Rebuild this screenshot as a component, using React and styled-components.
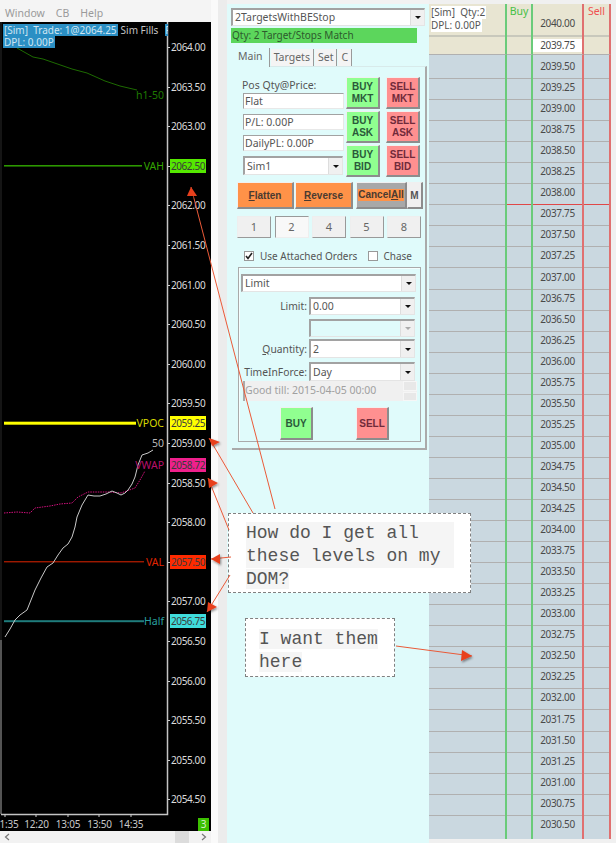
import styled, { createGlobalStyle } from "styled-components";

const GlobalStyle = createGlobalStyle`
  html, body { margin: 0; padding: 0; background: #f4f4f4; }
  * { box-sizing: border-box; }
`;

const UI_FONT = `"Noto Sans", "Liberation Sans", sans-serif`;

const priceY = (p) => 47 + (2064 - p) * 79.2 - 22;

const AXIS = [];
for (let p = 2064; p >= 2054.5; p -= 0.5) AXIS.push(p);

const LEVELS = [
  { price: 2062.5, name: "VAH", bg: "#55e800", color: "#35a500", line: "#2fa000", h: 1.5, end: 142 },
  { price: 2059.25, name: "VPOC", bg: "#ffff00", color: "#d8d800", line: "#ffff00", h: 3, end: 136 },
  { price: 2058.72, name: "VWAP", bg: "#f0208c", color: "#b8106c" },
  { price: 2057.5, name: "VAL", bg: "#ff2a00", color: "#e02400", line: "#e02400", h: 1, end: 144 },
  { price: 2056.75, name: "Half", bg: "#3fdcdc", color: "#2aa0a0", line: "#1f7c7c", h: 2, end: 144 },
];

// label, tick x, label centre x
const TIMES = [
  ["1:35", 5, 9],
  ["12:20", 36, 36.5],
  ["13:05", 68, 68],
  ["13:50", 99, 99.5],
  ["14:35", 131, 131],
];

const pts = (a) => a.map((p) => p.join(",")).join(" ");
const WHITE = [[5,637],[10,629],[15,620],[20,615],[27,610],[31,600],[35,590],[41,578],[47,567],[53,563],[58,555],[63,548],[68,544],[72,537],[75,527],[77,517],[82,505],[88,495],[94,496],[100,496],[106,494],[112,491],[117,493],[121,495],[125,493],[128,490],[132,484],[135,477],[138,465],[142,455],[148,453],[153,450]];
const VWAP = [[4,513],[17,512],[30,513],[35,508],[50,506],[60,504],[72,503],[78,497],[88,492],[110,492],[121,493],[135,488],[140,480],[145,471]];
const H1 = [[17,48],[33,57],[43,59],[72,69],[87,73],[105,81],[120,86],[137,90]];

const ARROWS = [
  { from: [275, 509], tip: [191, 187], a: [187, 196], b: [197, 196] },
  { from: [253, 513], tip: [209, 438], a: [220, 442], b: [212, 446] },
  { from: [229, 530], tip: [208, 478], a: [218, 483], b: [209, 488] },
  { from: [231, 557], tip: [211, 559], a: [220, 554], b: [220, 564] },
  { from: [230, 575], tip: [207, 612], a: [208, 602], b: [217, 607] },
  { from: [396, 646], tip: [472, 656], a: [462, 650], b: [461, 661] },
];

const DOM_ROWS = [];
for (let p = 2039.5; p >= 2030.5; p -= 0.25) DOM_ROWS.push(p);

const Page = styled.div`
  position: relative;
  display: flex;
  width: 616px;
  height: 843px;
  overflow: hidden;
  font-family: ${UI_FONT};
  background: #f4f4f4;
`;

/* ---------- chart window ---------- */
const ChartWindow = styled.div`
  width: 211px;
  height: 843px;
  display: flex;
  flex-direction: column;
`;

const MenuBar = styled.div`
  height: 22px;
  background: #f4f4f4;
  display: flex;
  align-items: center;
  gap: 11px;
  padding: 3px 0 0 5px;
  font-size: 10.5px;
  color: #9a9a9a;
`;

const ChartBody = styled.div`
  position: relative;
  flex: 1;
  background: #000;
  overflow: hidden;
`;

const ChartSvg = styled.svg`
  position: absolute;
  left: 0;
  top: 0;
`;

const InfoRow = styled.div`
  position: absolute;
  left: 3px;
  top: ${(p) => p.$top}px;
  display: flex;
  white-space: pre;
  font-size: 10px;
  line-height: 12px;
`;

const InfoTag = styled.span`
  background: #2b8fc4;
  color: #cfe6f2;
  padding: 0 1px;
`;

const InfoPlain = styled.span`
  color: #c4c4c4;
  padding-left: 3px;
`;

const InfoClip = styled.span`
  width: 3px;
  margin-left: 7px;
  overflow: hidden;
  background: #2b8fc4;
  color: #cfe6f2;
`;

const AxisLabel = styled.div`
  position: absolute;
  left: 171px;
  font-size: 10px;
  letter-spacing: -0.4px;
  line-height: 14px;
  color: #dcdcdc;
  transform: translateY(-7px);
  &::before {
    content: "";
    position: absolute;
    left: -3px;
    top: 7px;
    width: 2px;
    height: 1px;
    background: #ccc;
  }
`;

const LevelTag = styled.div`
  position: absolute;
  left: 170px;
  width: 36px;
  height: 14px;
  text-align: center;
  font-size: 10px;
  letter-spacing: -0.4px;
  line-height: 14px;
  color: #3a3a3a;
  background: ${(p) => p.$bg};
  transform: translateY(-7px);
`;

const LevelName = styled.div`
  position: absolute;
  right: 47px;
  font-size: 10.5px;
  line-height: 14px;
  color: ${(p) => p.$color};
  transform: translateY(-7px);
`;

const TimeLabel = styled.div`
  position: absolute;
  top: 795px;
  font-size: 10px;
  letter-spacing: -0.2px;
  line-height: 14px;
  color: #c8c8c8;
  transform: translateX(-50%);
`;

const PageBadge = styled.div`
  position: absolute;
  left: 198px;
  top: 796px;
  width: 11px;
  height: 13px;
  background: #3cc000;
  color: #d8f0c8;
  font-size: 10px;
  line-height: 13px;
  text-align: center;
`;

const HScroll = styled.div`
  height: 12px;
  background: #f2f2f2;
  display: flex;
  align-items: center;
  justify-content: space-between;
  padding: 0 4px;
`;

const ScrollArrow = styled.svg`
  width: 6px;
  height: 8px;
`;

const ScrollThumb = styled.div`
  width: 14px;
  height: 12px;
  background: #dcdcdc;
  margin-left: auto;
  margin-right: 12px;
`;

const Gutter = styled.div`
  width: 16px;
  display: flex;
`;

const GutterLeft = styled.div`
  width: 7px;
  background: #fafafa;
`;

const GutterRight = styled.div`
  flex: 1;
  background: #ececec;
`;

/* ---------- order panel ---------- */
const Panel = styled.div`
  width: 202px;
  background: #e0fbfb;
  padding: 8px 0 0 4px;
  position: relative;
`;

const PanelTopStrip = styled.div`
  position: absolute;
  left: 0;
  top: 0;
  right: 0;
  height: 4px;
  background: #f2f2f2;
`;

const Combo = styled.div`
  display: flex;
  width: ${(p) => p.$w}px;
  height: ${(p) => p.$h || 18}px;
  background: ${(p) => (p.$off ? "#e0fbfb" : "#fff")};
  border-style: solid;
  border-width: 2px 1px 1px 2px;
  border-color: #a2a2a2 #e4e4e4 #e4e4e4 #a2a2a2;
  font-size: 10.5px;
  line-height: ${(p) => (p.$h || 18) - 3}px;
  color: #555;
  overflow: hidden;
`;

const ComboText = styled.span`
  flex: 1;
  padding-left: 2px;
  white-space: nowrap;
`;

const ComboButton = styled.span`
  width: 14px;
  background: #f0f0f0;
  border-left: 1px solid #ddd;
  display: flex;
  align-items: center;
  justify-content: center;
  &::after {
    content: "";
    border-style: solid;
    border-width: 3px 3px 0 3px;
    border-color: ${(p) => (p.$off ? "#aaa" : "#111")} transparent transparent transparent;
  }
`;

const StatusBar = styled.div`
  width: 186px;
  height: 15px;
  margin-top: 2px;
  background: #5cd65c;
  font-size: 10px;
  line-height: 15px;
  color: #2d5a2d;
  padding-left: 1px;
  white-space: nowrap;
`;

const TabBar = styled.div`
  display: flex;
  gap: 1px;
  margin: 5px 0 0 1px;
  height: 18px;
`;

const Tab = styled.div`
  padding: 0 ${(p) => (p.$on ? 6 : 3)}px;
  height: ${(p) => (p.$on ? 19 : 17)}px;
  margin-top: ${(p) => (p.$on ? 0 : 1)}px;
  font-size: 10.5px;
  line-height: 16px;
  color: #666;
  background: ${(p) => (p.$on ? "#e0fbfb" : "#f4f4f4")};
  border-right: 1.5px solid #999;
  position: relative;
`;

const Pane = styled.div`
  width: 195px;
  height: 384px;
  margin-left: 1px;
  padding: 10px 0 0 5px;
  border-top: 1px solid #d8eaea;
  border-right: 2px solid #aaa;
  border-bottom: 2px solid #aaa;
`;

const TopBlock = styled.div`
  display: flex;
  gap: 2px;
  margin-left: 6px;
  height: 100px;
`;

const PosColumn = styled.div`
  width: 101px;
  display: flex;
  flex-direction: column;
`;

const PosLabel = styled.div`
  height: 16px;
  padding-top: 2px;
  margin-left: -1px;
  font-size: 10.5px;
  line-height: 13px;
  color: #555;
  white-space: nowrap;
`;

const ReadOnly = styled.div`
  height: 16px;
  margin-bottom: 5px;
  background: #fff;
  border-style: solid;
  border-width: 1px 1px 1px 1px;
  border-color: #a2a2a2 #e8e8e8 #e8e8e8 #a2a2a2;
  font-size: 10.5px;
  line-height: 14px;
  padding-left: 1px;
  color: #555;
  white-space: nowrap;
`;

const TradeGrid = styled.div`
  display: grid;
  grid-template-columns: 34px 34px;
  grid-auto-rows: 32px;
  column-gap: 6px;
  row-gap: 2px;
`;

const raised = `
  border-style: solid;
  border-width: 1px 2px 2px 1px;
  border-color: #f0f0f0 #8c8c8c #8c8c8c #f0f0f0;
`;

const TradeButton = styled.div`
  ${raised}
  background: ${(p) => (p.$sell ? "#ff9090" : "#90ff90")};
  font-family: "Liberation Sans", sans-serif;
  font-size: 10px;
  font-weight: 700;
  line-height: 12px;
  color: ${(p) => (p.$sell ? "#702a3a" : "#2a5a3a")};
  text-align: center;
  display: flex;
  align-items: center;
  justify-content: center;
`;

const ActionRow = styled.div`
  display: flex;
  margin-top: 5px;
  height: 27px;
`;

const ActionButton = styled.div`
  ${raised}
  width: ${(p) => p.$w}px;
  margin-right: ${(p) => p.$gap || 0}px;
  background: ${(p) => (p.$muted ? "#a8a8a8" : "#ff9248")};
  font-family: "Liberation Sans", sans-serif;
  font-size: 10px;
  font-weight: 700;
  color: #4a3a30;
  display: flex;
  align-items: center;
  justify-content: center;
  u { text-decoration: underline; }
`;

const OrangeText = styled.span`
  background: #ff9248;
  line-height: 12px;
`;

const MoreButton = styled.div`
  ${raised}
  width: 16px;
  background: #f0f0f0;
  font-family: "Liberation Sans", sans-serif;
  font-size: 10px;
  font-weight: 700;
  color: #555;
  display: flex;
  align-items: center;
  justify-content: center;
`;

const SizeRow = styled.div`
  display: flex;
  gap: 3.5px;
  margin-top: 7px;
  height: 22px;
`;

const SizeButton = styled.div`
  width: 34px;
  height: 22px;
  background: ${(p) => (p.$on ? "#f8f8f8" : "#f0f0f0")};
  border-style: solid;
  border-width: 1px;
  border-color: ${(p) => (p.$on ? "#999 #eee #eee #999" : "#eee #999 #999 #eee")};
  font-size: 11px;
  line-height: 20px;
  text-align: center;
  color: #666;
`;

const CheckRow = styled.div`
  display: flex;
  align-items: center;
  margin: 11px 0 0 7px;
  height: 13px;
  font-size: 10px;
  color: #555;
  white-space: nowrap;
`;

const CheckBox = styled.span`
  width: 10px;
  height: 10px;
  margin-right: ${(p) => p.$gap}px;
  margin-left: ${(p) => p.$left || 0}px;
  background: #fff;
  border: 1px solid #999;
  display: flex;
`;

const GroupBox = styled.div`
  width: 183px;
  height: 175px;
  margin: 5px 0 0 1px;
  padding: 6px 3px 0 2px;
  border: 1px solid #aaa;
  box-shadow: inset 1px 1px 0 #f4ffff;
`;

const FormRow = styled.div`
  display: grid;
  grid-template-columns: 66px 108px;
  column-gap: 2px;
  margin-top: ${(p) => p.$top}px;
  align-items: center;
`;

const FormLabel = styled.label`
  font-size: 10.3px;
  color: #555;
  text-align: right;
  white-space: nowrap;
`;

const DateField = styled.div`
  display: flex;
  width: 174px;
  height: 20px;
  margin: 0 0 0 2px;
  background: #f0f0f0;
  border-left: 2px solid #aaa;
  font-size: 10.5px;
  line-height: 19px;
  color: #a0a0a0;
  white-space: nowrap;
`;

const DateText = styled.span`
  flex: 1;
`;

const Spin = styled.span`
  width: 14px;
  display: flex;
  flex-direction: column;
  gap: 1px;
`;

const SpinPart = styled.span`
  flex: 1;
  background: #e8e8e8;
  border: 1px solid #f6f6f6;
`;

const SubmitRow = styled.div`
  display: flex;
  gap: 43px;
  margin: 6px 0 0 39px;
`;

const SubmitButton = styled.div`
  ${raised}
  width: 33px;
  height: 33px;
  background: ${(p) => (p.$sell ? "#ff9090" : "#90ff90")};
  font-family: "Liberation Sans", sans-serif;
  font-size: 10px;
  font-weight: 700;
  color: ${(p) => (p.$sell ? "#702a3a" : "#2a5a3a")};
  display: flex;
  align-items: center;
  justify-content: center;
`;

/* ---------- DOM ladder ---------- */
const Dom = styled.div`
  flex: 1;
  padding-top: 4px;
  background: #f0f0f0;
`;

const Ladder = styled.div`
  width: 182px;
`;

const DomRow = styled.div`
  display: grid;
  grid-template-columns: 78px 26px 51px 27px;
  height: ${(p) => p.$h || 21.05}px;
  background: ${(p) => (p.$head ? "#e8e5d2" : "#cad8e0")};
`;

const DomCell = styled.div`
  position: relative;
  border-bottom: ${(p) =>
    p.$last ? "0" : p.$mark ? "1px solid #e04848" : p.$soft ? "2px solid #c8c8bc" : "1.5px solid #b0b0b0"};
  border-right: ${(p) => (p.$line ? `2px solid ${p.$line}` : "0")};
`;

const PriceCell = styled(DomCell)`
  font-size: 10px;
  letter-spacing: -0.35px;
  color: #4a4a4a;
  text-align: center;
  line-height: 23px;
  padding-top: ${(p) => p.$pad || 0}px;
`;

const CurrentPrice = styled.div`
  background: #fff;
  height: 13px;
  margin-top: 5px;
  line-height: 13px;
`;

const HeadInfo = styled.div`
  font-size: 10px;
  line-height: 13px;
  color: #555;
  padding: 2px 0 0 2px;
`;

const HeadInfoLine = styled.span`
  display: table;
  background: #fff;
  white-space: pre;
  padding-right: 1px;
`;

const ColTitle = styled.div`
  font-size: 10.5px;
  line-height: 15px;
  text-align: center;
  color: ${(p) => p.$color};
`;

/* ---------- annotations ---------- */
const ArrowLayer = styled.svg`
  position: absolute;
  left: 0;
  top: 0;
  pointer-events: none;
`;

const Callout = styled.div`
  position: absolute;
  left: ${(p) => p.$x}px;
  top: ${(p) => p.$y}px;
  width: ${(p) => p.$w}px;
  height: ${(p) => p.$h}px;
  padding: ${(p) => p.$pad};
  background: #fff;
  border: 1px dashed #808080;
  font-family: "Liberation Mono", monospace;
  font-size: 18px;
  line-height: 23px;
  color: #555;
`;

const CalloutBlock = styled.div`
  width: 208px;
  background: #f5f5f5;
`;

const CalloutText = styled.span`
  background: #f5f5f5;
`;

const Select = ({ w, h, off, children }) => (
  <Combo $w={w} $h={h} $off={off}>
    <ComboText>{children}</ComboText>
    <ComboButton $off={off} />
  </Combo>
);

function Chart() {
  return (
    <ChartBody>
      <ChartSvg width="211" height="809" viewBox="0 22 211 809">
        <polyline points={pts(H1)} fill="none" stroke="#1d6a00" strokeWidth="1" />
        {LEVELS.filter((l) => l.line).map((l) => (
          <rect key={l.name} x="4" y={priceY(l.price) + 22 - l.h / 2} width={l.end - 4} height={l.h} fill={l.line} />
        ))}
        <polyline points={pts(VWAP)} fill="none" stroke="#d0107c" strokeWidth="1" strokeDasharray="1.5 1" />
        <polyline points={pts(WHITE)} fill="none" stroke="#c8c8c8" strokeWidth="1" />
        <line x1="1" x2="1" y1="22" y2="640" stroke="#2a2a2a" />
        <line x1="1" x2="1" y1="640" y2="814" stroke="#a8a8a8" />
        <path d="M167.5 22V814.5H1" fill="none" stroke="#c4c4c4" strokeWidth="1.5" />
        {TIMES.map(([t, x]) => (
          <line key={t} x1={x} x2={x} y1="814" y2="817" stroke="#ccc" />
        ))}
      </ChartSvg>
      <InfoRow $top={2}>
        <InfoTag>[Sim]  Trade: 1@2064.25</InfoTag>
        <InfoPlain>Sim Fills</InfoPlain>
        <InfoClip>F</InfoClip>
      </InfoRow>
      <InfoRow $top={14}>
        <InfoTag>DPL: 0.00P</InfoTag>
      </InfoRow>
      {AXIS.map((p) => (
        <AxisLabel key={p} style={{ top: priceY(p) }}>
          {p.toFixed(2)}
        </AxisLabel>
      ))}
      {LEVELS.map((l) => (
        <LevelTag key={l.name} $bg={l.bg} style={{ top: priceY(l.price) }}>
          {l.price.toFixed(2)}
        </LevelTag>
      ))}
      {LEVELS.map((l) => (
        <LevelName key={l.name} $color={l.color} style={{ top: priceY(l.price) }}>
          {l.name}
        </LevelName>
      ))}
      <LevelName $color="#1f7a00" style={{ top: 73 }}>h1-50</LevelName>
      <LevelName $color="#b8b8b8" style={{ top: 421 }}>50</LevelName>
      {TIMES.map(([t, , c]) => (
        <TimeLabel key={t} style={{ left: c }}>{t}</TimeLabel>
      ))}
      <PageBadge>3</PageBadge>
    </ChartBody>
  );
}

function OrderPanel() {
  return (
    <Panel>
      <PanelTopStrip />
      <Select w={194}>2TargetsWithBEStop</Select>
      <StatusBar>Qty: 2 Target/Stops Match</StatusBar>
      <TabBar>
        <Tab $on>Main</Tab>
        <Tab>Targets</Tab>
        <Tab>Set</Tab>
        <Tab>C</Tab>
      </TabBar>
      <Pane>
        <TopBlock>
          <PosColumn>
            <PosLabel>Pos Qty@Price:</PosLabel>
            <ReadOnly>Flat</ReadOnly>
            <ReadOnly>P/L: 0.00P</ReadOnly>
            <ReadOnly>DailyPL: 0.00P</ReadOnly>
            <Select w={100} h={19}>Sim1</Select>
          </PosColumn>
          <TradeGrid>
            <TradeButton>BUY<br />MKT</TradeButton>
            <TradeButton $sell>SELL<br />MKT</TradeButton>
            <TradeButton>BUY<br />ASK</TradeButton>
            <TradeButton $sell>SELL<br />ASK</TradeButton>
            <TradeButton>BUY<br />BID</TradeButton>
            <TradeButton $sell>SELL<br />BID</TradeButton>
          </TradeGrid>
        </TopBlock>
        <ActionRow>
          <ActionButton $w={57} $gap={1}><span><u>F</u>latten</span></ActionButton>
          <ActionButton $w={58} $gap={3}><span><u>R</u>everse</span></ActionButton>
          <ActionButton $w={51} $muted><OrangeText>Cancel<u>A</u>ll</OrangeText></ActionButton>
          <MoreButton>M</MoreButton>
        </ActionRow>
        <SizeRow>
          <SizeButton>1</SizeButton>
          <SizeButton $on>2</SizeButton>
          <SizeButton>4</SizeButton>
          <SizeButton>5</SizeButton>
          <SizeButton>8</SizeButton>
        </SizeRow>
        <CheckRow>
          <CheckBox $gap={6}>
            <svg width="8" height="8" viewBox="0 0 8 8">
              <path d="M1 4l2 2.5L7 1" fill="none" stroke="#222" strokeWidth="1.6" />
            </svg>
          </CheckBox>
          Use Attached Orders
          <CheckBox $gap={5} $left={11} />
          Chase
        </CheckRow>
        <GroupBox>
          <Select w={175}>Limit</Select>
          <FormRow $top={5}>
            <FormLabel>Limit:</FormLabel>
            <Select w={106}>0.00</Select>
          </FormRow>
          <FormRow $top={4}>
            <span />
            <Select w={106} off> </Select>
          </FormRow>
          <FormRow $top={2}>
            <FormLabel><u>Q</u>uantity:</FormLabel>
            <Select w={106} h={19}>2</Select>
          </FormRow>
          <FormRow $top={4}>
            <FormLabel>TimeInForce:</FormLabel>
            <Select w={106} h={19}>Day</Select>
          </FormRow>
          <DateField>
            <DateText>Good till: 2015-04-05 00:00</DateText>
            <Spin><SpinPart /><SpinPart /></Spin>
          </DateField>
          <SubmitRow>
            <SubmitButton>BUY</SubmitButton>
            <SubmitButton $sell>SELL</SubmitButton>
          </SubmitRow>
        </GroupBox>
      </Pane>
    </Panel>
  );
}

function Ladderview() {
  return (
    <Dom>
      <Ladder>
        <DomRow $head $h={30}>
          <DomCell $soft $line="#6acb7a">
            <HeadInfo>
              <HeadInfoLine>[Sim]  Qty:2</HeadInfoLine>
              <HeadInfoLine>DPL: 0.00P</HeadInfoLine>
            </HeadInfo>
          </DomCell>
          <DomCell $soft $line="#6acb7a"><ColTitle $color="#45c045">Buy</ColTitle></DomCell>
          <PriceCell $soft $line="#e07070" $pad={8}>2040.00</PriceCell>
          <DomCell $soft $line="#e07070"><ColTitle $color="#f05050">Sell</ColTitle></DomCell>
        </DomRow>
        <DomRow $head>
          <DomCell $line="#6acb7a" />
          <DomCell $line="#6acb7a" />
          <PriceCell $line="#e07070"><CurrentPrice>2039.75</CurrentPrice></PriceCell>
          <DomCell $line="#e07070" />
        </DomRow>
        {DOM_ROWS.map((p, i) => {
          const mark = p === 2038;
          const last = i === DOM_ROWS.length - 1;
          return (
            <DomRow key={p} $h={last ? 26 : undefined}>
              <DomCell $last={last} $line="#6acb7a" />
              <DomCell $last={last} $mark={mark} $line="#6acb7a" />
              <PriceCell $last={last} $mark={mark} $line="#e07070">{p.toFixed(2)}</PriceCell>
              <DomCell $last={last} $mark={mark} $line="#e07070" />
            </DomRow>
          );
        })}
      </Ladder>
    </Dom>
  );
}

export default function App() {
  return (
    <Page>
      <GlobalStyle />
      <ChartWindow>
        <MenuBar>
          <span>Window</span>
          <span>CB</span>
          <span>Help</span>
        </MenuBar>
        <Chart />
        <HScroll>
          <ScrollArrow viewBox="0 0 6 8">
            <path d="M5 1L1.5 4 5 7" fill="none" stroke="#777" strokeWidth="1.2" />
          </ScrollArrow>
          <ScrollThumb />
          <ScrollArrow viewBox="0 0 6 8">
            <path d="M1 1l3.5 3L1 7" fill="none" stroke="#777" strokeWidth="1.2" />
          </ScrollArrow>
        </HScroll>
      </ChartWindow>
      <Gutter>
        <GutterLeft />
        <GutterRight />
      </Gutter>
      <OrderPanel />
      <Ladderview />
      <Callout $x={228} $y={513} $w={243} $h={80} $pad="8px 12px 0 17px">
        <CalloutBlock>How do I get all these levels on my</CalloutBlock>
        <CalloutText>DOM?</CalloutText>
      </Callout>
      <Callout $x={245} $y={618} $w={150} $h={59} $pad="9px 8px 0 13px">
        <CalloutText>I want them here</CalloutText>
      </Callout>
      <ArrowLayer width="616" height="843">
        <defs>
          <filter id="sh" x="-50%" y="-50%" width="200%" height="200%">
            <feDropShadow dx="1" dy="1.5" stdDeviation="1.2" floodColor="#000" floodOpacity="0.45" />
          </filter>
        </defs>
        {ARROWS.map((a, i) => (
          <g key={i}>
            <line x1={a.from[0]} y1={a.from[1]} x2={a.tip[0]} y2={a.tip[1]} stroke="#ea5a38" strokeWidth="1" />
            <polygon points={pts([a.tip, a.a, a.b])} fill="#e8401f" filter="url(#sh)" />
          </g>
        ))}
      </ArrowLayer>
    </Page>
  );
}
